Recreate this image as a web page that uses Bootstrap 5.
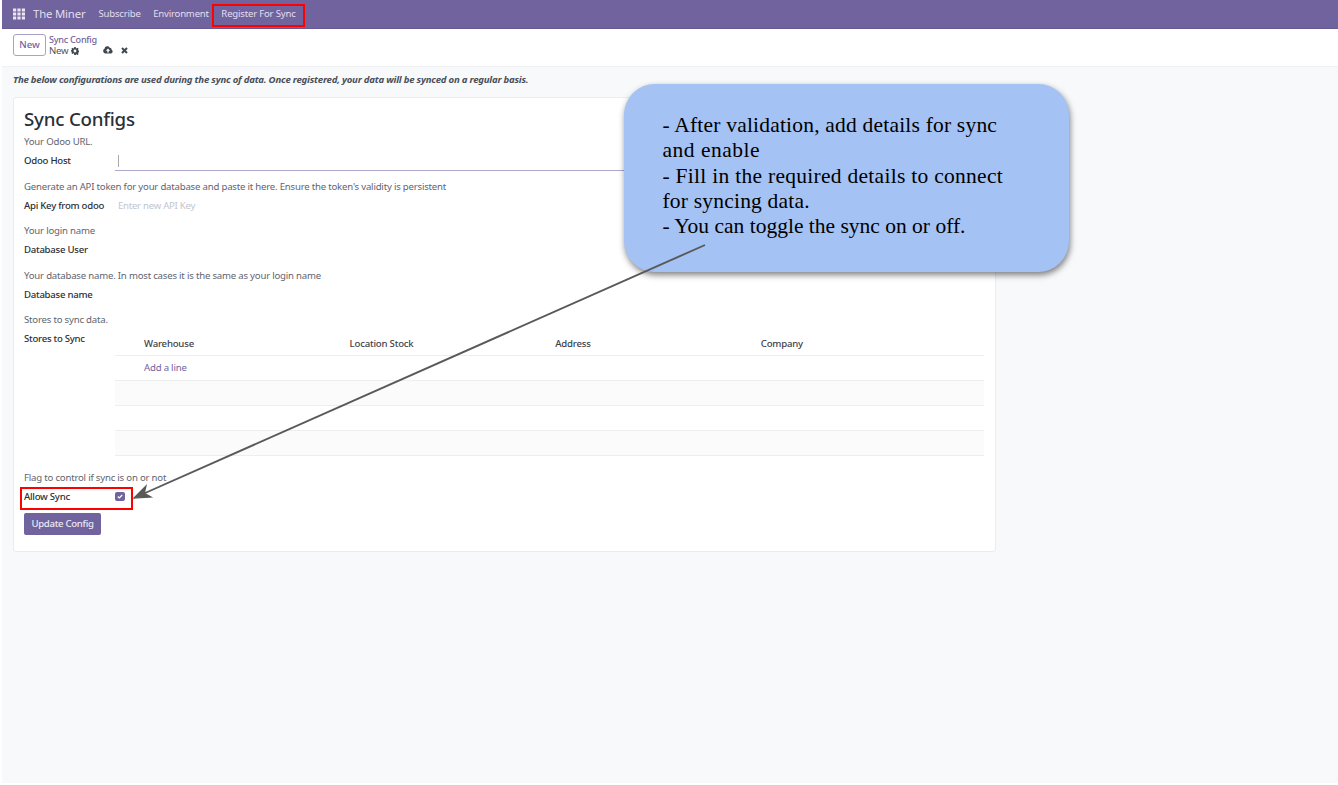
<!DOCTYPE html>
<html lang="en">
<head>
<meta charset="utf-8">
<title>Sync Config</title>
<link href="https://cdn.jsdelivr.net/npm/bootstrap@5.3.0/dist/css/bootstrap.min.css" rel="stylesheet">
<style>
body{font-family:"Noto Sans",sans-serif;font-size:9.6px;letter-spacing:-.2px;line-height:18px;color:#4f5560;width:1338px;height:785px;overflow:hidden;white-space:nowrap;background:#fff}
.app-shell{width:1336px;height:783px;margin-left:2px;background:#f8f9fb}
.top-bar{height:29px;background:#71639e;color:#e3dfee;padding:0 0 1px 11px;border-bottom:1px solid #675a92}
.brand-name{font-size:11.4px;margin:0 13px 0 8px}
.nav-item-a{margin-right:12.500px}
.hot{box-shadow:0 0 0 2px red}
.nav-hot{width:89px;height:19px;padding-left:7px;line-height:15px;margin-left:-7px;position:relative;top:1.500px}
.control-bar{height:38px;background:#fff;border-bottom:1px solid #eff0f3;padding-left:11px}
.btn-new{width:33px;height:22px;border:1px solid #aaa2c5;border-radius:3px;color:#71639e;font-weight:500;padding:0;font-size:9.6px;line-height:18px;margin-top:5px}
.crumbs{line-height:11px;margin:5px 0 0 3px;width:54px}
.crumbs .parent{color:#71639e;font-weight:500;font-size:9.1px;line-height:11px;letter-spacing:-.25px}
.gear{margin:0 0 0 3px}
.note{height:30px;padding:3.500px 0 0 11px;font-weight:700;font-style:italic;color:#4a4f59;letter-spacing:-.22px}
.sheet{width:983px;height:455px;margin-left:11px;border:1px solid #eaecef;border-radius:3px;background:#fff;padding:0 11px 0 10px}
.sheet h1{font-size:18.7px;font-weight:500;color:#2b2f36;line-height:42px;height:35px;margin:0}
.group{height:44.6px}
.help{height:18px;color:#5f6570}
.field{height:20px}
.lbl{width:91px;flex:none;font-weight:500;color:#2b2f36;line-height:19px;letter-spacing:-.26px}
.entry{flex:1;padding-left:3px;line-height:20px}
.entry.active{border-bottom:1px solid #b0a8ca}
.caret{width:1px;height:12px;background:#aaa;margin-top:4px}
.ghost{color:#c0c6cf;letter-spacing:-.26px}
.stores{height:157.6px}
.grid-row{height:24.9px;border-bottom:1px solid #eceef0;padding-left:29px;line-height:24px;color:#71639e}
.grid-row.head{height:26.9px;font-weight:500;color:#3d424b;line-height:29px}
.grid-row.head span{width:205.6px}
.grid-row.alt{background:#fbfbfb}
.check{width:10px;height:9px;background:#71639e;border-radius:2px}
.btn-update{width:77px;height:22px;background:#71639e;color:#ece9f4;border-radius:2px;font-size:9.6px;letter-spacing:-.3px;font-weight:500;line-height:22px;padding:0;border:0;display:block;margin-top:6px}
.field-hot{left:22px;top:489px;width:109px;height:19px}
.callout{left:624px;top:84px;width:445px;height:188px;border-radius:31px;background:#a4c2f4;box-shadow:1px 3px 6px rgba(0,0,0,.5);padding:29px 0 0 38.500px;font-family:"Liberation Serif",serif;font-size:21.5px;line-height:25.3px;color:#000;letter-spacing:.2px}
.callout .wide{letter-spacing:.28px}
.callout .wider{letter-spacing:.5px}
.callout .tight{letter-spacing:0}
.arrow{left:0;top:0;pointer-events:none}
</style>
</head>
<body class="position-relative">
<div class="app-shell">
  <nav class="top-bar d-flex align-items-center">
    <svg width="12" height="12" viewBox="0 0 12 12" fill="#e9e6f2"><path d="M0 .5h3.2v3H0zM4.4.5h3.2v3H4.4zM8.8.5H12v3H8.8zM0 4.5h3.2v3H0zM4.4 4.5h3.2v3H4.4zM8.8 4.5H12v3H8.8zM0 8.5h3.2v3H0zM4.4 8.5h3.2v3H4.4zM8.8 8.5H12v3H8.8z"/></svg>
    <span class="brand-name">The Miner</span>
    <span class="nav-item-a">Subscribe</span>
    <span class="nav-item-a">Environment</span>
    <span class="nav-hot hot">Register For Sync</span>
  </nav>
  <div class="control-bar d-flex align-items-start">
    <button class="btn btn-new">New</button>
    <div class="crumbs">
      <div class="parent">Sync Config</div>
      <div class="d-flex align-items-center">New
        <svg class="gear" width="8" height="8" viewBox="0 0 16 16"><path fill="#414750" fill-rule="evenodd" d="M6.5 0h3l.5 2.3 1.2.5 2-1.3 2.1 2.1-1.3 2 .5 1.2 2.3.5v3l-2.3.5-.5 1.1 1.3 2-2.1 2.1-2-1.3-1.2.5-.5 2.3h-3L6 13.200l-1.200-.5-2 1.300-2.100-2.100 1.300-2-.5-1.100L0 9.500v-3L1.500 6 2 4.800.700 3.600l2.100-2.100 2 1.300L6 2.300zM8 5.200a2.800 2.800 0 1 0 0 5.600 2.800 2.800 0 0 0 0-5.600z"/></svg>
      </div>
    </div>
    <svg style="margin-top:17px" width="10" height="8" viewBox="0 0 20 16"><path fill="#414750" fill-rule="evenodd" d="M5 15a5 5 0 0 1-2-9.400A5.600 5.600 0 0 1 13.500 3.500a3.500 3.500 0 0 1 3.600 4A4 4 0 0 1 16 15zM10 5L5.800 9.300h2.700V13h3V9.300h2.700z"/></svg>
    <svg style="margin:18px 0 0 8px" width="7" height="7" viewBox="0 0 7 7"><path d="M1 1l5 5M6 1L1 6" stroke="#414750" stroke-width="2"/></svg>
  </div>
  <div class="note">The below configurations are used during the sync of data. Once registered, your data will be synced on a regular basis.</div>
  <main class="sheet">
    <h1>Sync Configs</h1>
    <div class="group"><div class="help">Your Odoo URL.</div><div class="field d-flex"><div class="lbl">Odoo Host</div><div class="entry active"><div class="caret"></div></div></div></div>
    <div class="group"><div class="help">Generate an API token for your database and paste it here. Ensure the token's validity is persistent</div><div class="field d-flex"><div class="lbl">Api Key from odoo</div><div class="entry ghost">Enter new API Key</div></div></div>
    <div class="group"><div class="help">Your login name</div><div class="field d-flex"><div class="lbl">Database User</div></div></div>
    <div class="group"><div class="help">Your database name. In most cases it is the same as your login name</div><div class="field d-flex"><div class="lbl">Database name</div></div></div>
    <div class="stores"><div class="help">Stores to sync data.</div>
      <div class="d-flex"><div class="lbl">Stores to Sync</div>
        <div class="flex-grow-1">
          <div class="grid-row head d-flex"><span>Warehouse</span><span>Location Stock</span><span>Address</span><span>Company</span></div>
          <div class="grid-row">Add a line</div><div class="grid-row alt"></div><div class="grid-row"></div><div class="grid-row alt"></div>
        </div>
      </div>
    </div>
    <div class="help">Flag to control if sync is on or not</div>
    <div class="field d-flex align-items-center"><div class="lbl">Allow Sync</div>
      <div class="check d-flex align-items-center justify-content-center"><svg width="6" height="5" viewBox="0 0 6 5"><path d="M.8 2.500l1.500 1.400L5.200 1" fill="none" stroke="#fff" stroke-width="1.200"/></svg></div></div>
    <button class="btn btn-update">Update Config</button>
  </main>
</div>
<div class="field-hot hot position-absolute"></div>
<div class="callout position-absolute">
  <div>- After validation, add details for sync</div>
  <div class="wider">and enable</div>
  <div class="wide">- Fill in the required details to connect</div>
  <div>for syncing data.</div>
  <div class="tight">- You can toggle the sync on or off.</div>
</div>
<svg class="arrow position-absolute" width="1338" height="785"><path d="M705 245L144 493.500" stroke="#595959" stroke-width="1.900" fill="none"/><path d="M134 498L146 486L144.300 493.400L151 497z" fill="#595959" stroke="#595959" stroke-width="1.200"/></svg>
<script src="https://cdn.jsdelivr.net/npm/bootstrap@5.3.0/dist/js/bootstrap.bundle.min.js"></script>
</body>
</html>
